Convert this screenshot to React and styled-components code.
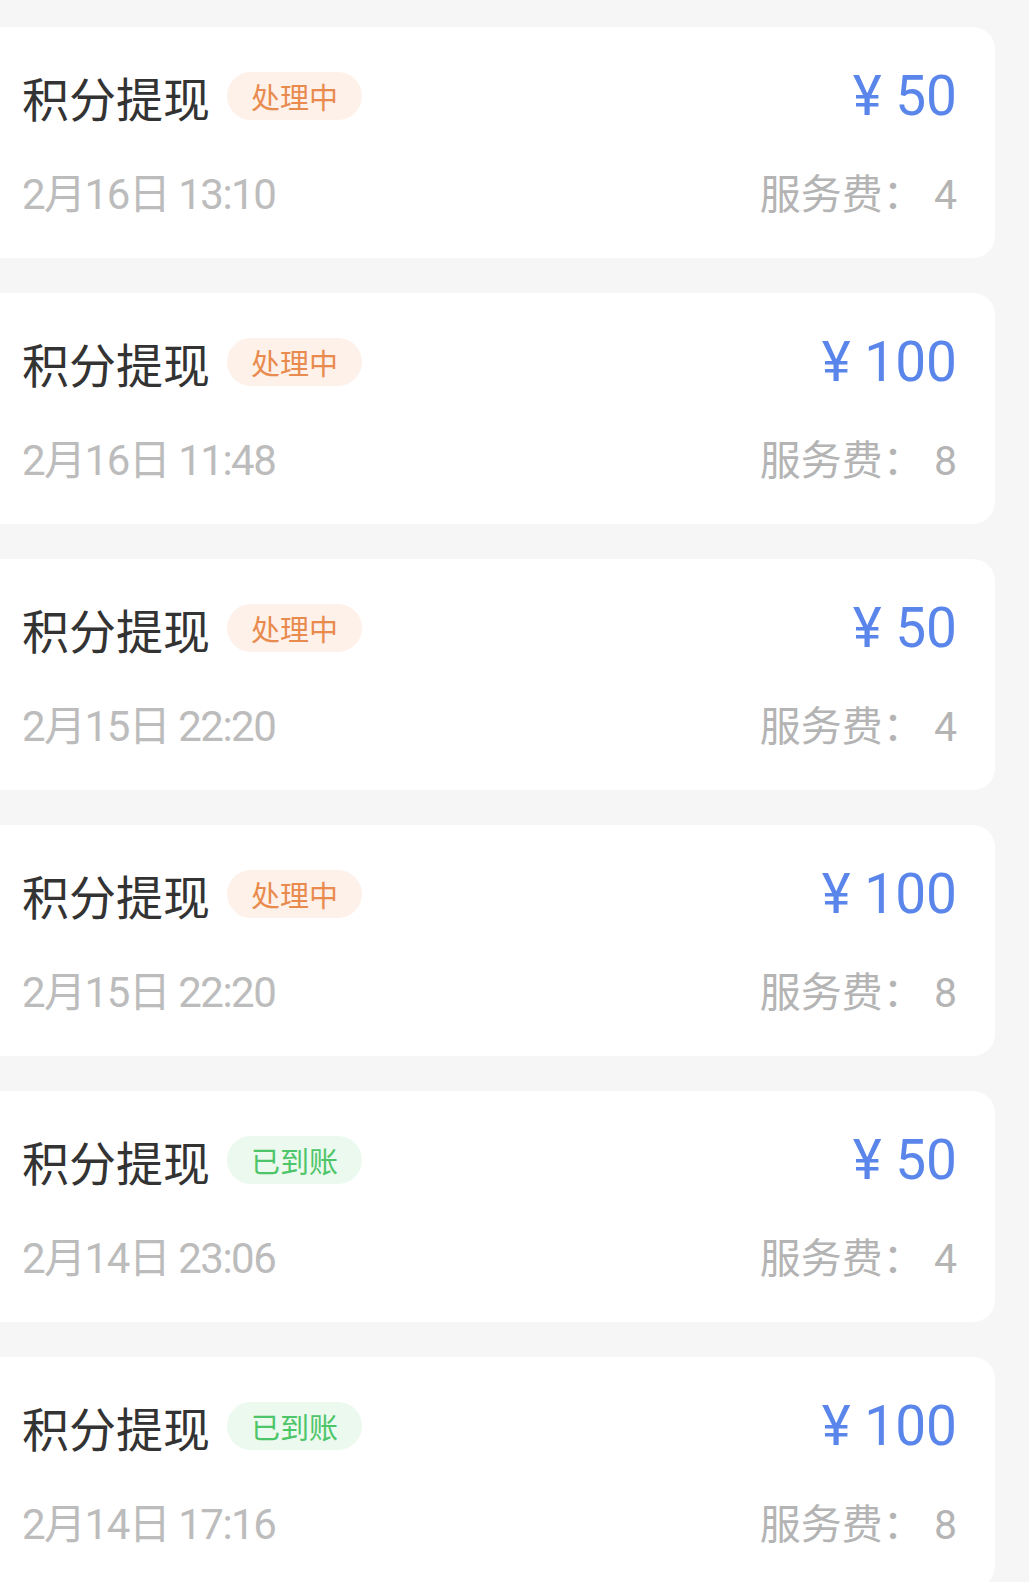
import React from 'react';
import styled, { createGlobalStyle } from 'styled-components';

const GlobalStyle = createGlobalStyle`
	body {
		margin: 0;
		background: #f6f6f6;
		font-family: "Noto Sans CJK SC", "Noto Sans", sans-serif;
	}
`;

const NUM_FONT = `Roboto, "Noto Sans CJK SC", sans-serif`;

const STATUS = {
	pending: { label: '处理中', color: '#e98b4e', bg: '#fdf1ea' },
	done: { label: '已到账', color: '#4fc56a', bg: '#ebf9ee' },
};

const records = [
	{ time: '2月16日 13:10', amount: 50, fee: 4, status: 'pending' },
	{ time: '2月16日 11:48', amount: 100, fee: 8, status: 'pending' },
	{ time: '2月15日 22:20', amount: 50, fee: 4, status: 'pending' },
	{ time: '2月15日 22:20', amount: 100, fee: 8, status: 'pending' },
	{ time: '2月14日 23:06', amount: 50, fee: 4, status: 'done' },
	{ time: '2月14日 17:16', amount: 100, fee: 8, status: 'done' },
];

const List = styled.div`
	display: flex;
	flex-direction: column;
	gap: 35px;
	padding: 27px 34px 0 0;
	margin-left: -20px;
`;

const Card = styled.div`
	display: flex;
	flex-direction: column;
	gap: 44px;
	height: 231px;
	box-sizing: border-box;
	padding: 39px 38px 0 42px;
	background: #fff;
	border-radius: 22px;
`;

const Row = styled.div`
	display: flex;
	justify-content: space-between;
	align-items: center;
	height: ${props => props.height}px;
`;

const TitleGroup = styled.div`
	display: flex;
	align-items: center;
	gap: 17px;
`;

const Title = styled.span`
	font-size: 47px;
	color: #333;
	line-height: 1;
`;

const Badge = styled.span`
	display: inline-flex;
	align-items: center;
	justify-content: center;
	width: 135px;
	height: 48px;
	border-radius: 24px;
	font-size: 29px;
	color: ${props => props.color};
	background: ${props => props.bg};
`;

const Amount = styled.span`
	font-family: ${NUM_FONT};
	font-size: 55px;
	color: #5a85ea;
	line-height: 1;
`;

const Time = styled.span`
	font-family: ${NUM_FONT};
	font-size: 42px;
	letter-spacing: -1.5px;
	color: #bcbcbc;
	line-height: 1;
`;

const Fee = styled.span`
	font-family: ${NUM_FONT};
	font-size: 41px;
	color: #b4b4b4;
	line-height: 1;
`;

const RecordCard = ({ time, amount, fee, status }) => {
	const s = STATUS[status];
	return (
		<Card>
			<Row height={60}>
				<TitleGroup>
					<Title>积分提现</Title>
					<Badge color={s.color} bg={s.bg}>{s.label}</Badge>
				</TitleGroup>
				<Amount>¥ {amount}</Amount>
			</Row>
			<Row height={50}>
				<Time>{time}</Time>
				<Fee>服务费： {fee}</Fee>
			</Row>
		</Card>
	);
};

export default function App() {
	return (
		<>
			<GlobalStyle />
			<List>
				{records.map((r, i) => (
					<RecordCard key={i} {...r} />
				))}
			</List>
		</>
	);
}
